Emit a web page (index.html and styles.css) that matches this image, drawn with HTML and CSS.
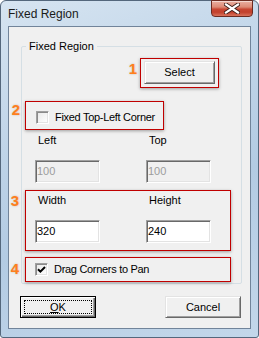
FILE: index.html
```html
<!DOCTYPE html>
<html lang="en">
<head>
  <meta charset="UTF-8" />
  <title>Fixed Region</title>
  <link rel="stylesheet" href="styles.css">
</head>
<body>

  <div class="window">
    <!-- Title bar -->
    <div class="titlebar">
      <span class="title">Fixed Region</span>
      <button class="close" aria-label="Close">
        <svg width="16" height="11" viewBox="0 0 16 11">
          <path d="M2 1.5 L14 9.5 M14 1.5 L2 9.5" stroke="#3b1d18" stroke-width="4" stroke-linecap="square" />
          <path d="M2 1.5 L14 9.5 M14 1.5 L2 9.5" stroke="#fff" stroke-width="2.2" stroke-linecap="square" />
        </svg>
      </button>
    </div>

    <!-- Client area -->
    <div class="client">
      <div class="group">
        <span class="legend">Fixed Region</span>

        <div class="mark mark-select">
          <span class="num num-1">1</span>
          <button class="btn btn-select">Select</button>
        </div>

        <div class="mark mark-fixed">
          <span class="num num-2">2</span>
          <label class="check"><span class="box"></span>Fixed Top-Left Corner</label>
        </div>

        <div class="fields fields-pos">
          <div class="field">
            <span>Left</span>
            <input type="text" value="100" disabled>
          </div>
          <div class="field">
            <span>Top</span>
            <input type="text" value="100" disabled>
          </div>
        </div>

        <div class="mark mark-size">
          <span class="num num-3">3</span>
          <div class="fields">
            <div class="field">
              <span>Width</span>
              <input type="text" value="320">
            </div>
            <div class="field">
              <span>Height</span>
              <input type="text" value="240">
            </div>
          </div>
        </div>

        <div class="mark mark-drag">
          <span class="num num-4">4</span>
          <label class="check">
            <span class="box">
              <svg width="9" height="9" viewBox="0 0 9 9">
                <path d="M1 4.2 L3.4 6.6 L8 2" fill="none" stroke="#000" stroke-width="2" />
              </svg>
            </span>Drag Corners to Pan
          </label>
        </div>
      </div>

      <div class="actions">
        <button class="btn btn-default"><span class="focus"><u>O</u>K</span></button>
        <button class="btn">Cancel</button>
      </div>
    </div>
  </div>

</body>
</html>
```

FILE: styles.css
```css
* {
  margin: 0;
  padding: 0;
  box-sizing: border-box;
}

body {
  font-family: 'Liberation Sans', Arial, sans-serif;
  font-size: 11px;
  line-height: 13px;
  color: #000;
  background: #fff;
}

/* Window frame */
.window {
  width: 259px;
  height: 338px;
  display: flex;
  flex-direction: column;
  padding: 0 7px 8px;
  border: 1px solid #54677c;
  border-radius: 6px 6px 3px 3px;
  background: linear-gradient(160deg, #d6e4f1 0%, #bfd4e8 35%, #b3cbe3 60%, #c3d7ea 100%);
}

.titlebar {
  height: 25px;
  display: flex;
  justify-content: space-between;
  align-items: flex-start;
  margin-right: -2px;
}

.title {
  font-size: 12px;
  line-height: 14px;
  margin-top: 6px;
  color: #1a1a1a;
}

.close {
  width: 42px;
  height: 17px;
  margin-top: -1px;
  border: 1px solid #6b2b21;
  border-radius: 0 0 4px 4px;
  background: linear-gradient(#eab0a2 0%, #dd8a76 40%, #c74632 55%, #c2412d 75%, #d8735c 100%);
  display: flex;
  justify-content: center;
  align-items: center;
  box-shadow: inset 0 1px rgba(255, 255, 255, 0.5);
}

.client {
  height: 304px;
  border: 1px solid #71849a;
  background: #f0f0f0;
}

/* Group box */
.group {
  width: 221px;
  margin: 19px 0 0 12px;
  padding-bottom: 1px;
  border: 1px solid #d5dfe5;
  border-radius: 2px;
}

.legend {
  display: table;
  margin: -7px 0 0 4px;
  padding: 0 3px;
  background: #f0f0f0;
}

/* Red annotation boxes */
.mark {
  position: relative;
  border: 1px solid #c00000;
  box-shadow: 0 1px 3px rgba(0, 0, 0, 0.35);
}

.mark-select {
  width: 79px;
  margin: 5px 0 0 118px;
  padding: 2px 3px 3px;
}

.mark-fixed {
  width: 139px;
  height: 29px;
  margin: 13px 0 0 3px;
  padding: 4px 0 0 10px;
  display: flex;
  align-items: center;
}

.mark-size {
  width: 206px;
  margin: 7px 0 0 3px;
  padding: 3px 0 7px 9px;
}

.mark-drag {
  width: 206px;
  height: 25px;
  margin: 6px 0 0 3px;
  padding-left: 9px;
  display: flex;
  align-items: center;
}

.num {
  position: absolute;
  right: calc(100% + 6px);
  font-size: 15px;
  line-height: 15px;
  font-weight: bold;
  color: #ff7f1e;
  text-shadow: 0 0 2px rgba(120, 60, 0, 0.35);
}

.num-1 { top: 2px; right: calc(100% + 4px); }
.num-2 { top: 0; }
.num-3 { top: 2px; right: calc(100% + 7px); }
.num-4 { top: 3px; right: calc(100% + 7px); }

/* Buttons */
.btn {
  width: 76px;
  height: 22px;
  font-family: inherit;
  font-size: 11px;
  color: #000;
  background: #f0f0f0;
  border: 1px solid;
  border-color: #e3e3e3 #696969 #696969 #e3e3e3;
  box-shadow: inset 1px 1px #fff, inset -1px -1px #a0a0a0;
}

.btn-select {
  width: 71px;
  height: 23px;
  display: block;
}

.btn-default {
  border-color: #000;
  box-shadow: inset 1px 1px #fff, inset -1px -1px #696969, inset -2px -2px #a0a0a0;
  padding: 3px;
}

.focus {
  display: block;
  height: 100%;
  border: 1px dotted #000;
  line-height: 12px;
}

.focus u {
  text-underline-offset: 1px;
}

/* Checkboxes */
.check {
  display: flex;
  align-items: center;
  gap: 6px;
  letter-spacing: -0.3px;
}

.box {
  width: 13px;
  height: 13px;
  display: flex;
  justify-content: center;
  align-items: center;
  border: 1px solid;
  border-color: #a0a0a0 #fff #fff #a0a0a0;
  background: linear-gradient(135deg, #e8e8e8, #fff);
  box-shadow: inset 1px 1px #8a8a8a, inset -1px -1px #e3e3e3;
}

/* Edit fields */
.fields {
  display: grid;
  grid-template-columns: 111px 65px;
}

.fields-pos {
  margin: 4px 0 0 13px;
}

.field span {
  display: block;
  padding-left: 3px;
}

.field input {
  display: block;
  width: 65px;
  height: 23px;
  margin-top: 13px;
  padding: 0 1px;
  font-family: inherit;
  font-size: 11px;
  color: #000;
  background: #fff;
  border: 1px solid;
  border-color: #a0a0a0 #fff #fff #a0a0a0;
  box-shadow: inset 1px 1px #696969, inset -1px -1px #e3e3e3;
  outline: none;
}

.field input:disabled {
  color: #9d9d9d;
  background: #f0f0f0;
}

/* Dialog buttons */
.actions {
  display: flex;
  justify-content: space-between;
  margin-top: 12px;
  padding: 0 9px 0 11px;
}
```
